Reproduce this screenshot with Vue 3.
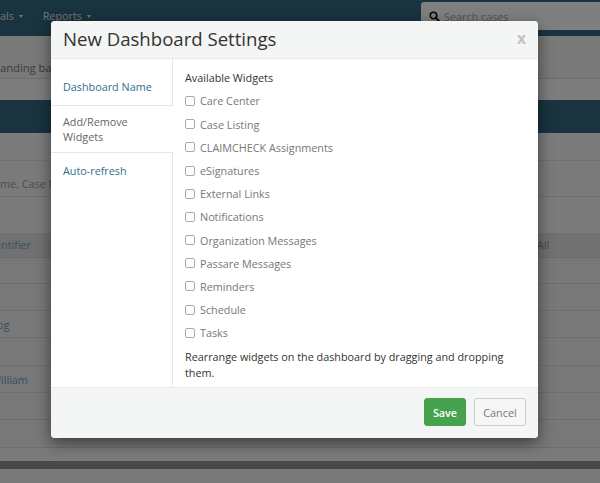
<script setup>
import { ref } from 'vue'

const widgets = ref([
  'Care Center',
  'Case Listing',
  'CLAIMCHECK Assignments',
  'eSignatures',
  'External Links',
  'Notifications',
  'Organization Messages',
  'Passare Messages',
  'Reminders',
  'Schedule',
  'Tasks'
])
const rowHeights = [26, 27, 27, 28, 27, 27, 28]
</script>

<template>
  <div class="page">
    <!-- page behind the dialog -->
    <div class="nav">
      <div class="nav-links">
        <span>als <i class="caret"></i></span>
        <span>Reports <i class="caret"></i></span>
      </div>
      <div class="search">
        <svg class="search-icon" viewBox="0 0 16 16" width="11" height="11">
          <circle cx="6.5" cy="6.5" r="4.7" fill="none" stroke="#0d0d0d" stroke-width="2.4" />
          <path d="M10 10l4.5 4.5" stroke="#0d0d0d" stroke-width="2.8" stroke-linecap="round" />
        </svg>
        <span>Search cases</span>
      </div>
    </div>
    <div class="crumb"><span>anding ba</span></div>
    <div class="sub"></div>
    <div class="band"></div>
    <div class="filter-top"></div>
    <div class="filter"><span>me, Case N</span></div>
    <div class="gap"></div>
    <div class="thead"><span class="ident">entifier</span><span class="all">All</span></div>
    <div class="rows">
      <div v-for="(h, i) in rowHeights" :key="i" class="row" :style="{ height: h + 'px' }">
        <span v-if="i === 2" class="cell short">og</span>
        <span v-if="i === 4" class="cell long">William</span>
      </div>
    </div>
    <div class="tail"></div>
    <div class="footbar"></div>
    <div class="end"></div>

    <div class="backdrop"></div>

    <div class="modal">
      <div class="modal-header">
        <h2>New Dashboard Settings</h2>
        <span class="close">x</span>
      </div>
      <div class="modal-body">
        <div class="tabs">
          <a class="tab link">Dashboard Name</a>
          <a class="tab active">Add/Remove Widgets</a>
          <a class="tab link">Auto-refresh</a>
        </div>
        <div class="content">
          <div class="heading">Available Widgets</div>
          <label v-for="w in widgets" :key="w" class="check">
            <span class="box"></span>
            <span>{{ w }}</span>
          </label>
          <p class="hint">Rearrange widgets on the dashboard by dragging and dropping them.</p>
        </div>
      </div>
      <div class="modal-footer">
        <button class="btn save">Save</button>
        <button class="btn cancel">Cancel</button>
      </div>
    </div>
  </div>
</template>

<style>
html, body { margin: 0; padding: 0; }
</style>

<style scoped>
.page { position: relative; width: 600px; height: 483px; overflow: hidden; background: #f4f4f4; font-family: "Open Sans", "Liberation Sans", sans-serif; font-size: 10.8px; color: #333; }
.nav { height: 36px; background: #33677f; display: flex; justify-content: space-between; align-items: flex-start; color: #e4e4e4; }
.nav-links { display: flex; gap: 20px; padding-top: 8px; line-height: 16px; font-size: 10.8px; }
.caret { display: inline-block; width: 0; height: 0; margin-left: 2px; vertical-align: 2px; border-left: 2.5px solid transparent; border-right: 2.5px solid transparent; border-top: 3px solid #e4e4e4; }
.search { width: 179px; height: 28px; margin-top: 2px; box-sizing: border-box; padding-left: 8px; background: #fff; border-radius: 3px 0 0 3px; display: flex; align-items: center; gap: 4px; color: #aaa; font-size: 10.8px; }
.search-icon { flex: none; }
.crumb { height: 43px; box-sizing: border-box; background: #f2f2f2; border-bottom: 1px solid #ddd; padding-top: 23px; line-height: 18px; color: #777; font-size: 11.2px; }
.sub { height: 21px; background: #fbfbfb; }
.band { height: 33px; background: #33677f; }
.filter-top { height: 28px; background: #f7f7f7; border-bottom: 1px solid #e2e2e2; box-sizing: border-box; }
.filter { height: 36px; background: #f4f4f4; border-bottom: 1px solid #ddd; box-sizing: border-box; padding-top: 14px; line-height: 18px; color: #9a9a9a; }
.gap { height: 36px; background: #f7f7f7; }
.thead { height: 25px; background: #e2e2e2; border-bottom: 1px solid #d4d4d4; box-sizing: border-box; position: relative; line-height: 24px; color: #6f9fb6; }
.ident { display: inline-block; margin-left: -5px; }
.thead .all { position: absolute; left: 537px; top: 0; }
.row { box-sizing: border-box; border-bottom: 1px solid #dadada; background: #f1f1f1; display: flex; align-items: center; font-size: 10.8px; color: #6f9fb6; }
.short { margin-left: -3px; }
.long { margin-left: -9px; }
.tail { height: 13px; background: #f5f5f5; }
.footbar { height: 8px; background: #929292; }
.end { height: 14px; background: #f2f2f2; }
.backdrop { position: absolute; inset: 0; background: rgba(0, 0, 0, 0.5); }

.modal { position: absolute; left: 51px; top: 21px; width: 487px; height: 417px; background: #fff; border-radius: 4px; box-shadow: 0 5px 15px rgba(0, 0, 0, 0.5); display: flex; flex-direction: column; overflow: hidden; }
.modal-header { height: 38px; flex: none; box-sizing: border-box; background: #f4f5f5; border-bottom: 1px solid #e8e8e8; display: flex; justify-content: space-between; align-items: center; padding: 0 12px 1px; }
.modal-header h2 { margin: 0; font-size: 18.6px; font-weight: 400; color: #333; line-height: 36px; }
.close { color: #c4c4c4; font-size: 15.5px; font-weight: 700; line-height: 1; }
.modal-body { flex: 1; display: flex; min-height: 0; }
.tabs { width: 121px; flex: none; border-right: 1px solid #e6e6e6; padding-top: 10px; }
.tab { display: block; padding: 10px 12px; line-height: 16px; box-sizing: border-box; }
.tab.link { color: #2f7187; }
.tab.active { color: #666; margin-right: -1px; background: #fff; border-top: 1px solid #e6e6e6; border-bottom: 1px solid #e6e6e6; padding: 7.5px 12px; line-height: 15.5px; }
.content { flex: 1; padding: 10px 12px 0; color: #333; }
.heading { line-height: 18px; margin-bottom: 2.4px; }
.check { display: flex; align-items: center; gap: 5px; height: 23.2px; color: #777; }
.box { width: 8px; height: 8px; border: 1px solid #aaa; border-radius: 2px; background: #fff; flex: none; }
.hint { margin: 5px 0 0; line-height: 15.5px; color: #333; }
.modal-footer { height: 51px; flex: none; box-sizing: border-box; background: #f4f5f5; border-top: 1px solid #e8e8e8; display: flex; justify-content: flex-end; align-items: center; gap: 8px; padding: 0 12px 2px 0; }
.btn { height: 28px; border-radius: 3px; font-family: inherit; font-size: 10.8px; padding: 0; box-sizing: border-box; }
.save { width: 42px; background: #45a24d; color: #fff; border: 1px solid #45a24d; font-weight: 600; }
.cancel { width: 52px; background: #f6f6f6; color: #777; border: 1px solid #ccc; }
</style>
